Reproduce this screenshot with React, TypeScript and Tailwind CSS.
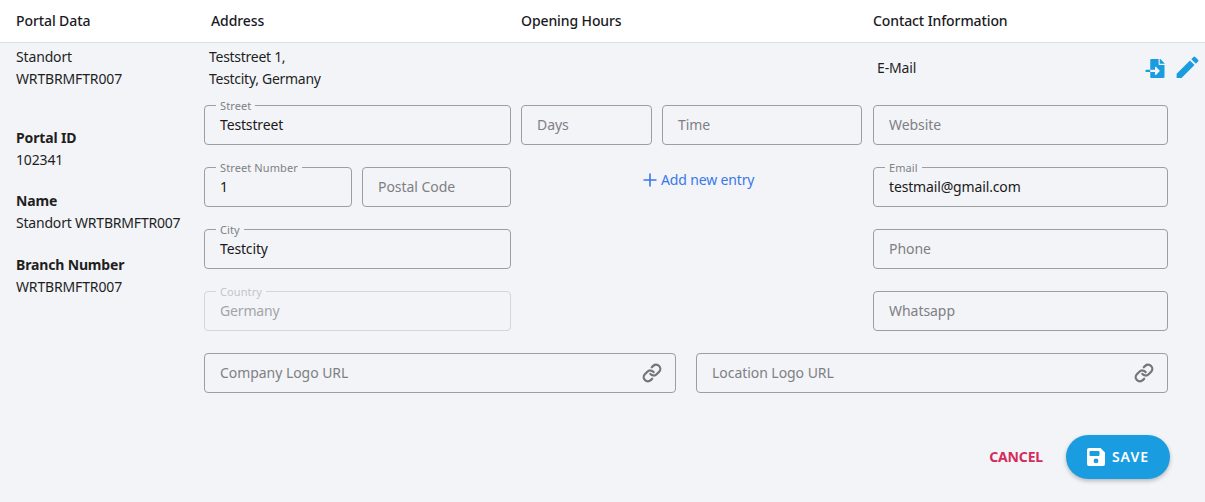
import { FaFileImport } from "react-icons/fa";
import { MdEdit } from "react-icons/md";
import { Link as LinkIcon } from "lucide-react";

function Field({ label, value, placeholder, disabled, icon, className }: { label?: string; value?: string; placeholder?: string; disabled?: boolean; icon?: boolean; className?: string }) {
  return (
    <div className={`relative flex h-10 items-center rounded border px-[15px] text-sm ${disabled ? "border-[#d4d5da]" : "border-[#9d9ea3]"} ${className ?? ""}`}>
      {label && (
        <span className={`absolute -top-[6px] left-[11px] bg-[#f3f4f8] px-[4px] text-[11px] leading-[12px] tracking-[0.1px] ${disabled ? "text-[#c4c5c9]" : "text-[#808184]"}`}>{label}</span>
      )}
      {value && <span className={disabled ? "text-[#a3a4a7]" : "text-[#1a1a1a]"}>{value}</span>}
      {placeholder && <span className="tracking-[-0.05px] text-[#7f8083]">{placeholder}</span>}
      {icon && <LinkIcon strokeWidth={2.7} className="absolute right-[13px] top-[9px] h-[20px] w-[20px] text-[#757575]" />}
    </div>
  );
}

function Head({ children, className }: { children: string; className?: string }) {
  return <div className={`text-sm font-medium tracking-[-0.1px] text-[#1a1a24] ${className ?? ""}`}>{children}</div>;
}

export default function App() {
  return (
    <div className="flex h-[502px] w-[1205px] flex-col bg-[#f3f4f8] text-sm tracking-[-0.15px] text-[#1f1f1f] [font-family:'Noto_Sans',sans-serif]">
      <div className="flex h-[43px] items-center border-b border-[#dcdde1] bg-white pb-[1px]">
        <Head className="w-[211px] pl-4">Portal Data</Head>
        <Head className="w-[310px]">Address</Head>
        <Head className="w-[352px]">Opening Hours</Head>
        <Head>Contact Information</Head>
      </div>
      <div className="flex">
        <div className="w-[204px] pl-4 leading-[22px]">
          <div className="pt-[3px]">Standort</div>
          <div>WRTBRMFTR007</div>
          <div className="mt-[37px] font-bold">Portal ID</div>
          <div>102341</div>
          <div className="mt-[19px] font-bold">Name</div>
          <div className="tracking-[-0.2px]">Standort WRTBRMFTR007</div>
          <div className="mt-[20px] font-bold">Branch Number</div>
          <div>WRTBRMFTR007</div>
        </div>
        <div className="w-[964px]">
          <div className="flex h-[62px]">
            <div className="w-[669px] pl-[5px] pt-[3px] leading-[22px] tracking-[-0.28px]">
              <div>Teststreet 1,</div>
              <div>Testcity, Germany</div>
            </div>
            <div className="flex-1 pl-[4px] pt-[14px] leading-[22px]">E-Mail</div>
            <div className="relative w-0 text-[#1a9de0]">
              <FaFileImport className="absolute left-[-23px] top-[16px] h-[19px] w-[20px]" />
              <div className="absolute left-[5px] top-[10px] h-[25px] w-[29px] overflow-hidden">
                <MdEdit className="h-[29px] w-[29px]" />
              </div>
            </div>
          </div>
          <div className="flex gap-[10px]">
            <div className="flex w-[307px] flex-col gap-[22px]">
              <Field label="Street" value="Teststreet" />
              <div className="flex gap-[10px]">
                <Field label="Street Number" value="1" className="w-[148px]" />
                <Field placeholder="Postal Code" className="flex-1" />
              </div>
              <Field label="City" value="Testcity" />
              <Field label="Country" value="Germany" disabled />
            </div>
            <div className="flex w-[342px] flex-col">
              <div className="flex gap-[10px]">
                <Field placeholder="Days" className="w-[131px]" />
                <Field placeholder="Time" className="w-[200px]" />
              </div>
              <div className="ml-[122px] mt-[25px] flex items-center gap-[4px] text-[#3a78e8]">
                <svg viewBox="0 0 14 14" className="h-[14px] w-[14px]" fill="none" stroke="currentColor" strokeWidth="1.6"><path d="M7 0.5v13M0.5 7h13" /></svg>
                <span>Add new entry</span>
              </div>
            </div>
            <div className="flex w-[295px] flex-col gap-[22px]">
              <Field placeholder="Website" />
              <Field label="Email" value="testmail@gmail.com" />
              <Field placeholder="Phone" />
              <Field placeholder="Whatsapp" />
            </div>
          </div>
          <div className="mt-[22px] flex gap-[20px]">
            <Field placeholder="Company Logo URL" icon className="w-[472px]" />
            <Field placeholder="Location Logo URL" icon className="w-[472px]" />
          </div>
        </div>
      </div>
      <div className="mt-[42px] flex items-center justify-end pr-[35px]">
        <button className="mr-[23px] text-sm font-bold text-[#d42c5a]">CANCEL</button>
        <button className="flex h-[44px] w-[104px] items-center justify-center gap-[7px] rounded-full bg-[#1a9de0] text-sm font-semibold tracking-[1px] text-white shadow-[0_2px_4px_rgba(0,0,0,0.25)]">
          <svg viewBox="0 0 18 18" className="h-[18px] w-[18px]" fill="currentColor">
            <path fillRule="evenodd" d="M2 0h11.5L18 4.5V16a2 2 0 0 1-2 2H2a2 2 0 0 1-2-2V2a2 2 0 0 1 2-2zM3.5 3a1 1 0 0 0-1 1v3a1 1 0 0 0 1 1h8a1 1 0 0 0 1-1V4a1 1 0 0 0-1-1zM9 10.5a2.4 2.4 0 1 0 0 4.8 2.4 2.4 0 0 0 0-4.8z" />
          </svg>
          SAVE
        </button>
      </div>
    </div>
  );
}
